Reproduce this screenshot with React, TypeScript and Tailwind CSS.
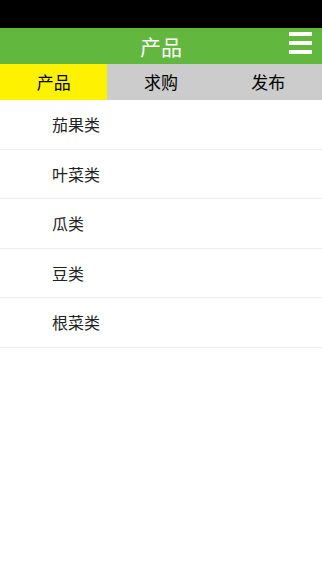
const items = ["茄果类", "叶菜类", "瓜类", "豆类", "根菜类"];
const tabs = ["产品", "求购", "发布"];

export default function App() {
  return (
    <div
      className="flex min-h-[572px] w-full flex-col bg-white"
      style={{ fontFamily: '"Noto Sans CJK SC", "Noto Sans", sans-serif' }}
    >
      <div className="h-[28px] bg-black" />
      <header className="relative flex h-[36px] items-center justify-center bg-[#62b83e]">
        <h1 className="text-[21px] leading-none text-white">产品</h1>
        <button className="absolute right-[10px] top-[4px] flex w-[23px] flex-col gap-[5px]">
          <span className="h-[4px] w-full bg-white" />
          <span className="h-[4px] w-full bg-white" />
          <span className="h-[4px] w-full bg-white" />
        </button>
      </header>
      <nav className="grid h-[36px] grid-cols-3 bg-[#cccccc]">
        {tabs.map((t, i) => (
          <div
            key={t}
            className={
              i === 0
                ? "flex items-center justify-center bg-[#fff200] text-[17px] text-black"
                : "flex items-center justify-center text-[17px] text-black"
            }
          >
            {t}
          </div>
        ))}
      </nav>
      <ul>
        {items.map((it) => (
          <li
            key={it}
            className="flex h-[49.5px] items-center border-b border-[#eeeeee] pl-[52px] text-[16px] text-[#222222]"
          >
            {it}
          </li>
        ))}
      </ul>
    </div>
  );
}
